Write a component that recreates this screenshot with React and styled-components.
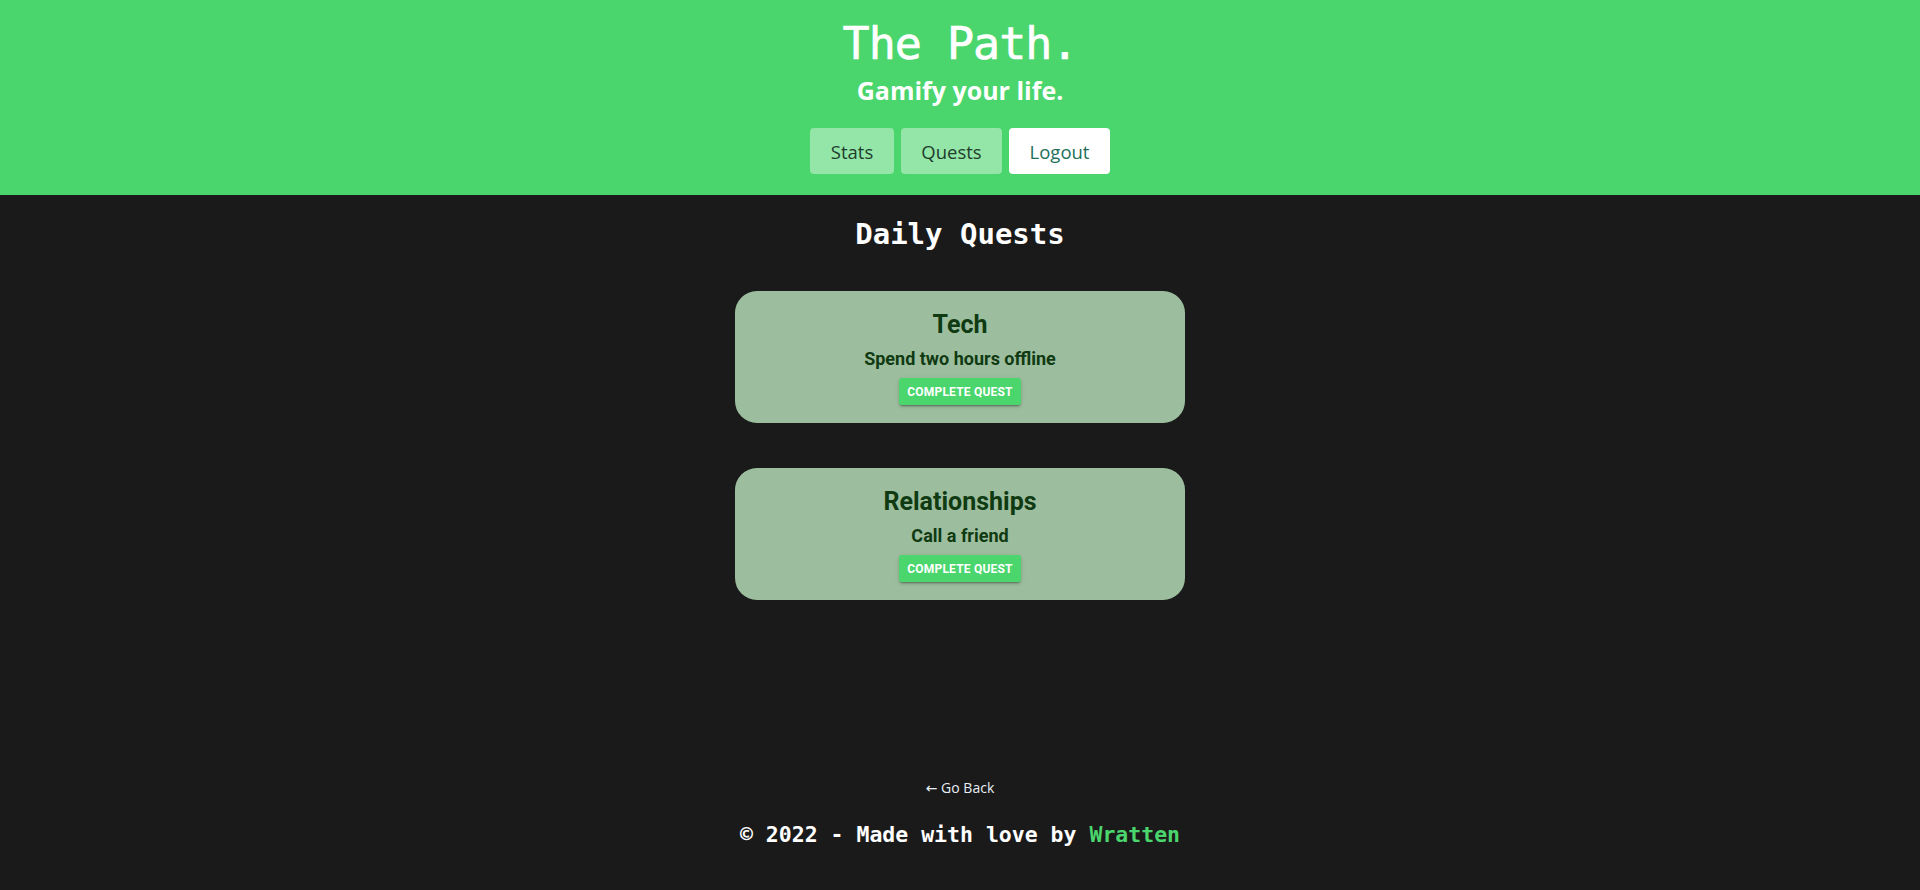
import React from "react";
import styled, { createGlobalStyle } from "styled-components";

const Global = createGlobalStyle`
  html, body { margin: 0; padding: 0; background: #1a1a1a; }
  body { font-family: "Open Sans", sans-serif; }
  #root { min-height: 890px; display: flex; flex-direction: column; }
`;

const Header = styled.header`
  background: #4ad66d;
  height: 195px;
  box-sizing: border-box;
  display: flex;
  flex-direction: column;
  align-items: center;
  padding-top: 14px;
`;

const Title = styled.h1`
  margin: 0;
  font-family: "DejaVu Sans Mono", monospace;
  font-weight: 400;
  font-size: 45px;
  line-height: 60px;
  color: #ffffff;
  letter-spacing: -1px;
  -webkit-text-stroke: 0.6px #ffffff;
`;

const Subtitle = styled.h2`
  margin: 0;
  font-family: "Open Sans", sans-serif;
  font-weight: 700;
  font-size: 25px;
  line-height: 32px;
  color: #ffffff;
`;

const Nav = styled.nav`
  display: flex;
  gap: 7px;
  margin-top: 22px;
`;

const NavButton = styled.button`
  height: 46px;
  width: ${(p) => p.$w}px;
  padding: 0;
  border: none;
  border-radius: 4px;
  font-family: "Open Sans", sans-serif;
  font-size: 18.5px;
  background: ${(p) => (p.$primary ? "#ffffff" : "#93e6a7")};
  color: ${(p) => (p.$primary ? "#22705a" : "#1e3d2d")};
`;

const Main = styled.main`
  flex: 1;
  display: flex;
  flex-direction: column;
  align-items: center;
`;

const PageTitle = styled.h2`
  margin: 22px 0 0;
  font-family: "DejaVu Sans Mono", monospace;
  font-weight: 700;
  font-size: 29px;
  line-height: 34px;
  color: #ffffff;
`;

const List = styled.div`
  display: flex;
  flex-direction: column;
  gap: 45px;
  margin-top: 40px;
`;

const Card = styled.div`
  width: 450px;
  height: 132px;
  box-sizing: border-box;
  background: #9dbe9e;
  border-radius: 22px;
  display: flex;
  flex-direction: column;
  align-items: center;
  padding-top: 19px;
  font-family: Roboto, sans-serif;
  color: #0f3a12;
`;

const Category = styled.h3`
  margin: 0;
  font-size: 25px;
  font-weight: 700;
  line-height: 30px;
`;

const Task = styled.p`
  margin: 7px 0 0;
  font-size: 18px;
  font-weight: 700;
  line-height: 24px;
`;

const CompleteButton = styled.button`
  margin-top: 7px;
  height: 27px;
  width: 122px;
  border: none;
  border-radius: 3px;
  background: #4ad66d;
  color: #ffffff;
  font-family: Roboto, sans-serif;
  font-weight: 700;
  font-size: 12px;
  text-transform: uppercase;
  letter-spacing: 0.2px;
  box-shadow: 0 3px 1px -2px rgba(0,0,0,0.2), 0 2px 2px 0 rgba(0,0,0,0.14), 0 1px 5px 0 rgba(0,0,0,0.12);
`;

const Footer = styled.footer`
  display: flex;
  flex-direction: column;
  align-items: center;
  padding-bottom: 41px;
`;

const BackLink = styled.a`
  font-family: "Open Sans", "DejaVu Sans", sans-serif;
  font-size: 14px;
  color: #e6eef5;
  text-decoration: none;
  line-height: 20px;
`;

const Credit = styled.p`
  margin: 23px 0 0;
  font-family: "DejaVu Sans Mono", monospace;
  font-weight: 700;
  font-size: 21.5px;
  line-height: 28px;
  color: #ffffff;
`;

const Accent = styled.span`
  color: #4ad66d;
`;

const quests = [
  { cat: "Tech", task: "Spend two hours offline" },
  { cat: "Relationships", task: "Call a friend" },
];

export default function App() {
  return (
    <>
      <Global />
      <Header>
        <Title>The Path.</Title>
        <Subtitle>Gamify your life.</Subtitle>
        <Nav>
          <NavButton $w={84}>Stats</NavButton>
          <NavButton $w={101}>Quests</NavButton>
          <NavButton $w={101} $primary>Logout</NavButton>
        </Nav>
      </Header>
      <Main>
        <PageTitle>Daily Quests</PageTitle>
        <List>
          {quests.map((q) => (
            <Card key={q.cat}>
              <Category>{q.cat}</Category>
              <Task>{q.task}</Task>
              <CompleteButton>Complete Quest</CompleteButton>
            </Card>
          ))}
        </List>
      </Main>
      <Footer>
        <BackLink href="#">← Go Back</BackLink>
        <Credit>
          © 2022 - Made with love by <Accent>Wratten</Accent>
        </Credit>
      </Footer>
    </>
  );
}
